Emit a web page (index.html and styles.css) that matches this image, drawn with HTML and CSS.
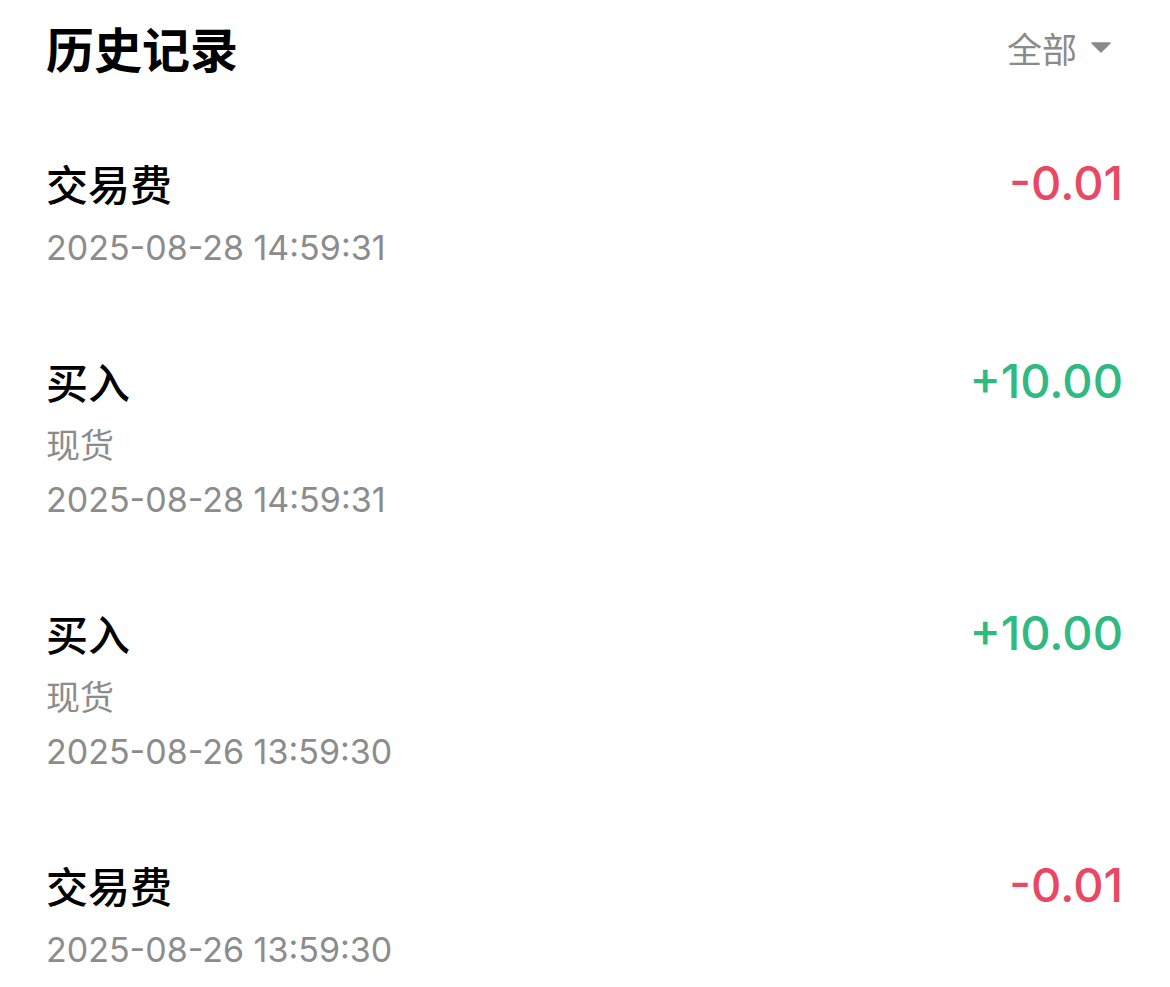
FILE: index.html
```html
<!DOCTYPE html>
<html lang="zh-CN">
<head>
<meta charset="utf-8">
<title>历史记录</title>
<link rel="stylesheet" href="styles.css">
</head>
<body>
<div class="page">
  <header class="header">
    <h1 class="title">历史记录</h1>
    <div class="filter">
      <span class="filter-label">全部</span>
      <svg class="caret" width="20" height="11" viewBox="0 0 20 11"><path d="M1 1 L19 1 L10 10 Z" fill="#8a8a8a" stroke="#8a8a8a" stroke-width="1.5" stroke-linejoin="round"/></svg>
    </div>
  </header>
  <ul class="list">
    <li class="item">
      <div class="item-main">
        <div class="item-title">交易费</div>
        <div class="item-sub">2025-08-28 14:59:31</div>
      </div>
      <div class="amount neg">-0.01</div>
    </li>
    <li class="item">
      <div class="item-main">
        <div class="item-title">买入</div>
        <div class="item-sub">现货</div>
        <div class="item-sub">2025-08-28 14:59:31</div>
      </div>
      <div class="amount pos">+10.00</div>
    </li>
    <li class="item">
      <div class="item-main">
        <div class="item-title">买入</div>
        <div class="item-sub">现货</div>
        <div class="item-sub">2025-08-26 13:59:30</div>
      </div>
      <div class="amount pos">+10.00</div>
    </li>
    <li class="item">
      <div class="item-main">
        <div class="item-title">交易费</div>
        <div class="item-sub">2025-08-26 13:59:30</div>
      </div>
      <div class="amount neg">-0.01</div>
    </li>
  </ul>
</div>
</body>
</html>
```
FILE: styles.css
```css
* { box-sizing: border-box; }
html, body {
  margin: 0;
  padding: 0;
  background: #ffffff;
}
body {
  font-family: Inter, "Noto Sans CJK SC", sans-serif;
  color: #000;
}
.page {
  padding: 0 47px 0 46px;
}
.header {
  display: flex;
  align-items: center;
  justify-content: space-between;
  height: 94px;
}
.title {
  margin: 0;
  font-size: 48px;
  font-weight: 700;
  line-height: 1;
  font-family: "Noto Sans CJK SC", sans-serif;
}
.filter {
  display: flex;
  align-items: center;
  gap: 14px;
  margin-right: 12px;
}
.filter-label {
  font-size: 35px;
  color: #8a8a8a;
  font-family: "Noto Sans CJK SC", sans-serif;
}
.caret { display: block; }
.list {
  list-style: none;
  margin: 51px 0 0;
  padding: 0;
  display: flex;
  flex-direction: column;
  gap: 68px;
}
.item {
  display: flex;
  justify-content: space-between;
  align-items: flex-start;
}
.item-title {
  font-family: "Noto Sans CJK SC", sans-serif;
  font-size: 42px;
  font-weight: 500;
  line-height: 76px;
}
.item-sub {
  font-size: 34px;
  line-height: 54px;
  color: #8c8c8c;
}
.amount {
  font-size: 47px;
  font-weight: 500;
  line-height: 76px;
}
.neg { color: #ea4862; }
.pos { color: #2fba82; }
```
